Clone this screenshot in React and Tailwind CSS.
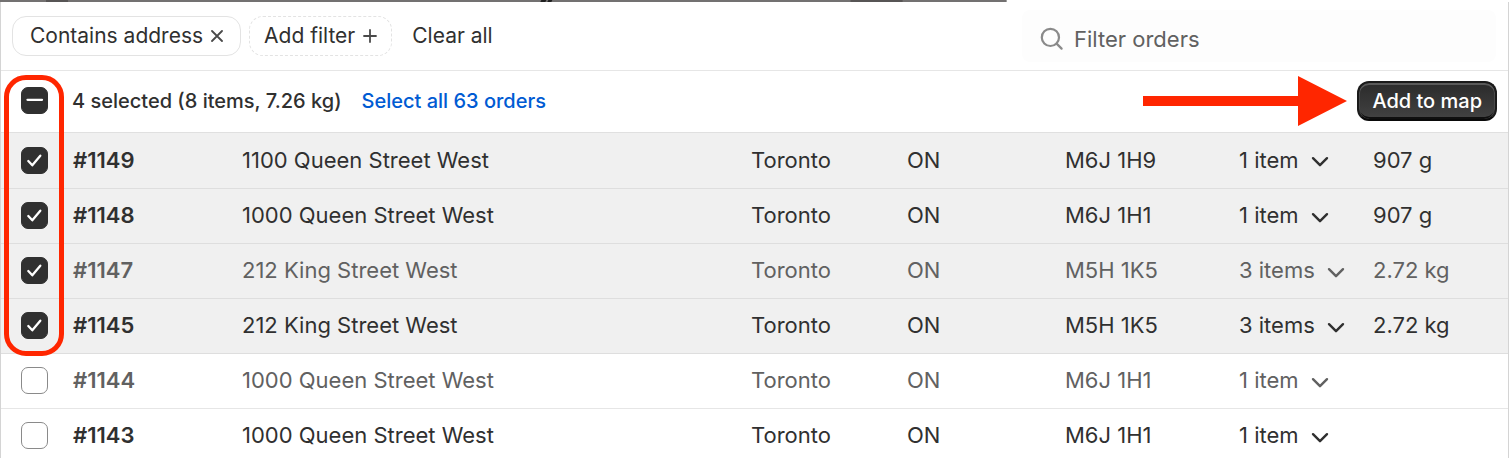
import { useState } from 'react';

const initialOrders = [
  { id: '#1149', address: '1100 Queen Street West', city: 'Toronto', province: 'ON', postal: 'M6J 1H9', items: '1 item', weight: '907 g', selected: true },
  { id: '#1148', address: '1000 Queen Street West', city: 'Toronto', province: 'ON', postal: 'M6J 1H1', items: '1 item', weight: '907 g', selected: true },
  { id: '#1147', address: '212 King Street West', city: 'Toronto', province: 'ON', postal: 'M5H 1K5', items: '3 items', weight: '2.72 kg', selected: true, muted: true },
  { id: '#1145', address: '212 King Street West', city: 'Toronto', province: 'ON', postal: 'M5H 1K5', items: '3 items', weight: '2.72 kg', selected: true },
  { id: '#1144', address: '1000 Queen Street West', city: 'Toronto', province: 'ON', postal: 'M6J 1H1', items: '1 item', weight: '', selected: false, muted: true },
  { id: '#1143', address: '1000 Queen Street West', city: 'Toronto', province: 'ON', postal: 'M6J 1H1', items: '1 item', weight: '', selected: false }
];

export default function App() {
  const [orders, setOrders] = useState(initialOrders);
  const [query, setQuery] = useState('');

  const all = orders.every((o) => o.selected);
  const some = orders.some((o) => o.selected);

  const toggle = (id) =>
    setOrders(orders.map((o) => (o.id === id ? { ...o, selected: !o.selected } : o)));
  const toggleAll = () => setOrders(orders.map((o) => ({ ...o, selected: !all })));

  return (
    <div className="h-screen overflow-hidden bg-white font-['Inter',sans-serif] text-[#303030]">
      <BackdropStrip />
      <main className="mr-px border-x border-x-[#d4d4d4]">
        <div className="flex h-[69px] items-center justify-between border-b border-[#e6e6e6] pr-3 pl-[11px]">
          <div className="flex items-center gap-2 text-[21px]">
            <button type="button" className="flex h-10 items-center gap-2 rounded-[14px] border border-[#e3e3e3] px-[17px]">
              Contains address
              <svg viewBox="0 0 12 12" className="size-3" fill="none" stroke="#4a4a4a" strokeWidth="1.8" strokeLinecap="round">
                <path d="M1 1l10 10M11 1L1 11" />
              </svg>
            </button>
            <button type="button" className="flex h-10 items-center gap-2 rounded-[14px] border border-dashed border-[#e3e3e3] px-[14px]">
              Add filter
              <svg viewBox="0 0 14 14" className="size-[14px]" fill="none" stroke="#4a4a4a" strokeWidth="1.8" strokeLinecap="round">
                <path d="M7 1v12M1 7h12" />
              </svg>
            </button>
            <button type="button" className="ml-3">Clear all</button>
          </div>
          <label className="flex h-[52px] w-[474px] items-center gap-[10px] rounded-lg bg-[#fdfdfd] pt-[6px] pl-[18px]">
            <svg viewBox="0 0 24 24" className="size-6" fill="none" stroke="#8a8a8a" strokeWidth="2.2" strokeLinecap="round">
              <circle cx="10.4" cy="10.4" r="8.6" />
              <path d="M16.6 16.6l5 5" />
            </svg>
            <input
              type="text"
              aria-label="Filter orders"
              placeholder="Filter orders"
              value={query}
              onChange={(e) => setQuery(e.target.value)}
              className="min-w-0 flex-1 bg-transparent text-[22px] outline-none placeholder:text-[#616161]"
            />
          </label>
        </div>

        <section className="relative">
          <div className="flex h-[62px] items-center border-b border-[#e0e0e0] pr-[11px] pb-[2px] pl-5">
            <Checkbox label="Select all orders on this page" checked={some} indeterminate={some && !all} onChange={toggleAll} />
            <span className="ml-6 text-xl font-medium">4 selected (8 items, 7.26 kg)</span>
            <a href="#all" className="ml-5 text-xl font-medium text-[#005bd3]">Select all 63 orders</a>
            <svg viewBox="0 0 204 50" className="mr-[10px] ml-auto h-[50px] w-[204px]" fill="#ff2600">
              <path d="M0 20h155V0l49 25-49 25V30H0z" />
            </svg>
            <button
              type="button"
              className="h-10 rounded-xl border-2 border-[#1a1a1a] border-b-[#0a0a0a] bg-gradient-to-b from-[#2b2b2b] to-[#424242] px-[13px] text-xl font-medium text-white shadow-[inset_0_2px_0_#5a5a5a,inset_1px_0_0_#4a4a4a,inset_-1px_0_0_#4a4a4a,inset_0_-2px_0_#0f0f0f]"
            >
              Add to map
            </button>
          </div>

          <table className="w-full table-fixed text-left text-[22px]">
            <colgroup>
              <col className="w-[72px]" />
              <col className="w-[169px]" />
              <col />
              <col className="w-[156px]" />
              <col className="w-[158px]" />
              <col className="w-[174px]" />
              <col className="w-[134px]" />
              <col className="w-[135px]" />
            </colgroup>
            <tbody>
              {orders.map((o) => (
                <OrderRow key={o.id} order={o} onToggle={() => toggle(o.id)} />
              ))}
            </tbody>
          </table>

          <div className="pointer-events-none absolute top-1 left-[3px] h-[281px] w-[60px] rounded-[22px] border-5 border-[#ff2600]" />
        </section>
      </main>
    </div>
  );
}

function OrderRow({ order, onToggle }) {
  return (
    <tr
      className={`h-[55px] border-b ${order.selected ? 'border-[#dedede] bg-[#f0f0f0]' : 'border-[#e6e6e6] bg-white'} ${order.muted ? 'text-[#616161]' : 'text-[#303030]'}`}
    >
      <td className="pl-5">
        <Checkbox label={`Select order ${order.id}`} checked={order.selected} onChange={onToggle} />
      </td>
      <th scope="row" className="font-semibold">{order.id}</th>
      <td>{order.address}</td>
      <td>{order.city}</td>
      <td>{order.province}</td>
      <td>{order.postal}</td>
      <td>
        <button type="button" className="flex items-center gap-3">
          {order.items}
          <svg viewBox="0 0 18 12" className="mt-1 h-3 w-[18px]" fill="none" stroke="currentColor" strokeWidth="2.4" strokeLinecap="round" strokeLinejoin="round">
            <path d="M2 2.2l7 7 7-7" />
          </svg>
        </button>
      </td>
      <td>{order.weight}</td>
    </tr>
  );
}

function Checkbox({ label, checked, indeterminate = false, onChange }) {
  return (
    <span className="grid size-[27px]">
      <input
        type="checkbox"
        aria-label={label}
        checked={checked}
        onChange={onChange}
        ref={(el) => {
          if (el) el.indeterminate = indeterminate;
        }}
        className="col-start-1 row-start-1 size-[27px] appearance-none rounded-[7px] border border-[#8a8a8a] bg-white checked:border-[#303030] checked:bg-[#303030] indeterminate:border-[#303030] indeterminate:bg-[#303030]"
      />
      {checked && (
        <svg viewBox="0 0 27 27" className="pointer-events-none col-start-1 row-start-1" fill="none" stroke="#fff" strokeWidth="2.3" strokeLinecap="round" strokeLinejoin="round">
          <path d={indeterminate ? 'M6.5 12.8h14.5' : 'M7.3 14l4 4.3 8-9.6'} />
        </svg>
      )}
    </span>
  );
}

// sliver of the map that shows above the panel
function BackdropStrip() {
  return (
    <svg viewBox="0 0 1006 2" preserveAspectRatio="none" className="block h-[2px] w-2/3">
      <path fill="#737171" d="M0 0h1006v2H0z" />
      <path fill="#575555" d="M46 0h22v2H46zM850 0h52v2h-52z" />
      <path fill="#1f1f1f" d="M541 0h5l-1 2h-5zM548 0h4l-1 2h-4z" />
    </svg>
  );
}
